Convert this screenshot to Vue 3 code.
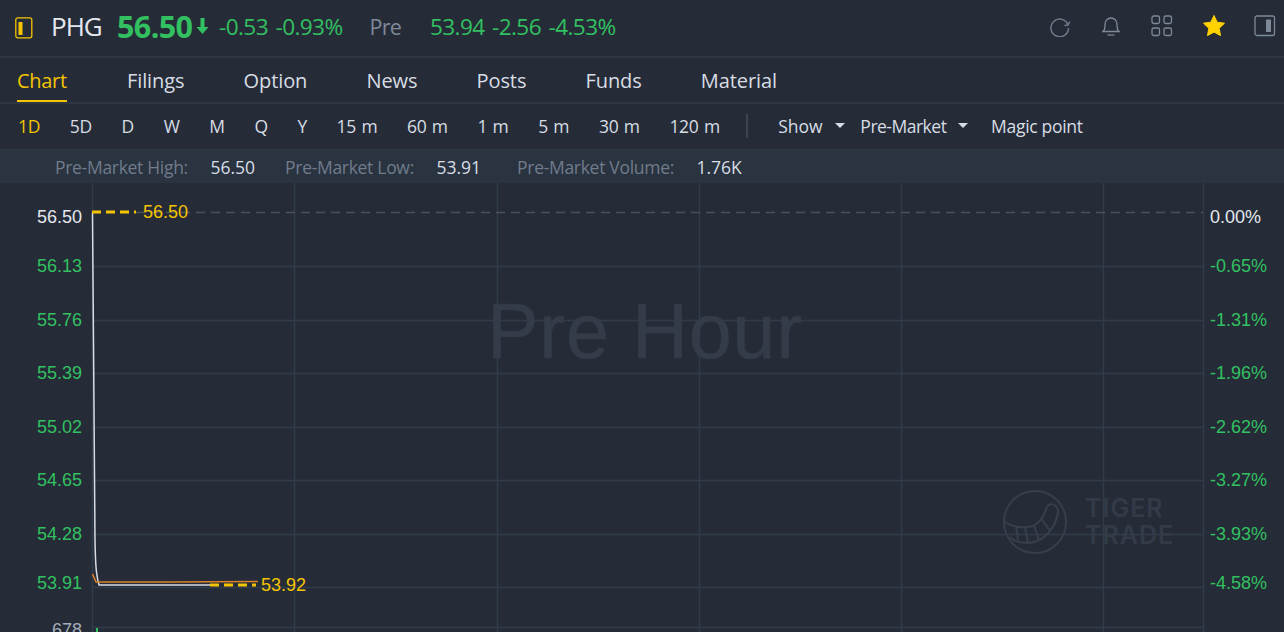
<script setup>
const tabs = ['Chart', 'Filings', 'Option', 'News', 'Posts', 'Funds', 'Material']
const periods = ['1D', '5D', 'D', 'W', 'M', 'Q', 'Y', '15 m', '60 m', '1 m', '5 m', '30 m', '120 m']
const stats = [
  { label: 'Pre-Market High:', value: '56.50' },
  { label: 'Pre-Market Low:', value: '53.91' },
  { label: 'Pre-Market Volume:', value: '1.76K' }
]
const vLines = [92, 294, 497, 699, 901, 1103, 1203]
const hLines = [266, 320, 373, 427, 480, 534, 587, 627]
const prices = [
  { t: '56.50', y: 223, c: '#e4e8ee' },
  { t: '56.13', y: 272, c: '#32c060' },
  { t: '55.76', y: 326, c: '#32c060' },
  { t: '55.39', y: 379, c: '#32c060' },
  { t: '55.02', y: 433, c: '#32c060' },
  { t: '54.65', y: 486, c: '#32c060' },
  { t: '54.28', y: 540, c: '#32c060' },
  { t: '53.91', y: 589, c: '#32c060' }
]
const pcts = [
  { t: '0.00%', y: 223, c: '#e4e8ee' },
  { t: '-0.65%', y: 272, c: '#32c060' },
  { t: '-1.31%', y: 326, c: '#32c060' },
  { t: '-1.96%', y: 379, c: '#32c060' },
  { t: '-2.62%', y: 433, c: '#32c060' },
  { t: '-3.27%', y: 486, c: '#32c060' },
  { t: '-3.93%', y: 540, c: '#32c060' },
  { t: '-4.58%', y: 589, c: '#32c060' }
]
</script>

<template>
  <div class="page">
    <header class="head">
      <svg class="logo" width="20" height="24" viewBox="0 0 20 24">
        <rect x=".8" y="1.800" width="16" height="20" rx="2" fill="none" stroke="#f5c400" stroke-width="1.300" />
        <rect x="3.500" y="6" width="4" height="13" fill="#f5c400" />
      </svg>
      <span class="sym">PHG</span>
      <span class="price">56.50</span>
      <svg class="arrow" width="13" height="18" viewBox="0 0 13 18">
        <path d="M4.500 1h4v9h4l-6 7-6-7h4z" fill="#32c060" />
      </svg>
      <span class="chg">-0.53</span>
      <span class="chg pc">-0.93%</span>
      <span class="pre">Pre</span>
      <span class="chg prep">53.94</span>
      <span class="chg pc">-2.56</span>
      <span class="chg pc">-4.53%</span>
      <div class="tools">
        <svg width="22" height="22" viewBox="0 0 22 22" fill="none" stroke="#6f7a8a" stroke-width="1.500">
          <path d="M18.800 9.500A8.800 8.800 0 1 0 19.500 13" />
          <path d="M15.500 10.500 19 10l1.800-3.300" />
        </svg>
        <svg width="20" height="22" viewBox="0 0 20 22" fill="none" stroke="#7d8898" stroke-width="1.300">
          <path d="M2 16.500c1.800-1.500 2-3 2-5.500V9a6 6 0 0 1 12 0v2c0 2.500.2 4 2 5.500z" />
          <path d="M6.500 20h7" />
        </svg>
        <svg width="22" height="22" viewBox="0 0 22 22" fill="none" stroke="#7d8898" stroke-width="1.300">
          <rect x="1" y="1" width="7.500" height="7.500" rx="1.800" />
          <rect x="13" y="1" width="7.500" height="7.500" rx="1.800" />
          <rect x="1" y="13" width="7.500" height="7.500" rx="1.800" />
          <rect x="13" y="13" width="7.500" height="7.500" rx="1.800" />
        </svg>
        <svg class="star" width="24" height="24" viewBox="0 0 24 24">
          <path d="M12 1.500l3.200 6.700 7.300 1-5.300 5.100 1.300 7.300L12 18.100l-6.500 3.500 1.300-7.300L1.500 9.200l7.300-1z" fill="#ffd200" stroke="#ffd200" stroke-width="1" stroke-linejoin="round" />
        </svg>
        <svg width="22" height="22" viewBox="0 0 22 22">
          <rect x="1" y="1" width="19.500" height="19.500" rx="2" fill="none" stroke="#7d8898" stroke-width="1.300" />
          <rect x="12" y="4.500" width="5" height="12.500" rx=".5" fill="#7d8898" />
        </svg>
      </div>
    </header>

    <nav class="tabs">
      <span v-for="(t, i) in tabs" :key="t" class="tab" :class="{ on: i === 0 }">{{ t }}</span>
    </nav>

    <div class="bar">
      <span v-for="(p, i) in periods" :key="p" class="per" :class="{ on: i === 0 }">{{ p }}</span>
      <i class="sep"></i>
      <span class="drop show">Show<b class="caret"></b></span>
      <span class="drop">Pre-Market<b class="caret"></b></span>
      <span class="magic">Magic point</span>
    </div>

    <div class="stats">
      <span v-for="s in stats" :key="s.label" class="stat">
        <span class="lab">{{ s.label }}</span>
        <span class="val">{{ s.value }}</span>
      </span>
    </div>

    <svg class="chart" width="1284" height="449" viewBox="0 183 1284 449">
      <line v-for="x in vLines" :key="x" :x1="x + .5" :x2="x + .5" y1="183" y2="632" stroke="#303c4a" stroke-width="1.400" />
      <line v-for="y in hLines" :key="y" x1="92" x2="1203" :y1="y + .5" :y2="y + .5" stroke="#303c4a" stroke-width="1.400" />
      <line x1="136" x2="1203" y1="212.500" y2="212.500" stroke="#4a505c" stroke-width="1.300" stroke-dasharray="9 6" />

      <text x="645" y="358" class="wm" text-anchor="middle">Pre Hour</text>

      <g fill="none" stroke="#373f4c" stroke-width="2">
        <circle cx="1035" cy="522" r="31" />
        <path d="M1047 507C1044 516 1038 527 1027 527C1019 528 1011 526 1005 522" />
        <path d="M1047 507C1050 502 1058 504 1058 512C1056 526 1045 543 1027 543C1020 543 1014 541 1010 537" />
        <path d="M1016 526l2 14M1025 527l3 16M1034 525l5 15M1041 518l9 13" />
      </g>
      <text x="1085" y="517" class="wmt">TIGER</text>
      <text x="1085" y="544" class="wmt">TRADE</text>

      <path d="M92.500 213L95 540Q95.500 565 96.500 572Q97.500 580 99 585H210" fill="none" stroke="#d9dde3" stroke-width="1.500" />
      <path d="M92.500 574L96 582H170L258 581.500" fill="none" stroke="#d9822b" stroke-width="1.600" />
      <line x1="92" x2="136" y1="212" y2="212" stroke="#f5c400" stroke-width="3" stroke-dasharray="9 5" />
      <line x1="210" x2="256" y1="585" y2="585" stroke="#f5c400" stroke-width="3" stroke-dasharray="9 5" />
      <rect x="96" y="628" width="2" height="4" fill="#32c060" />

      <text x="143" y="218" class="tick" fill="#f5c400">56.50</text>
      <text x="261" y="591" class="tick" fill="#f5c400">53.92</text>

      <text v-for="p in prices" :key="p.t" x="82" :y="p.y" class="tick" text-anchor="end" :fill="p.c">{{ p.t }}</text>
      <text x="82" y="636" class="tick" text-anchor="end" fill="#a4adb9">678</text>
      <text v-for="p in pcts" :key="p.t" x="1210" :y="p.y" class="tick" :fill="p.c">{{ p.t }}</text>
    </svg>
  </div>
</template>

<style scoped>
.page {
  width: 1284px;
  height: 632px;
  overflow: hidden;
  background: #252c38;
  font-family: "Open Sans", "Noto Sans", sans-serif;
  color: #d8dde4;
  display: flex;
  flex-direction: column;
}
.head {
  height: 58px;
  box-sizing: border-box;
  display: flex;
  align-items: center;
  padding: 0 8px 4px 15px;
  border-bottom: 2px solid #2e3744;
}
.logo { margin: 4px 16px 0 0; }
.sym { font-size: 26px; color: #e4e8ee; letter-spacing: -1px; width: 66px; }
.price { font-size: 30.500px; font-weight: 700; color: #32c060; letter-spacing: -.6px; width: 79px; }
.arrow { margin-right: 10px; }
.chg { font-size: 22.600px; color: #32c060; letter-spacing: -.6px; }
.chg.pc { margin-left: 7.500px; }
.pre { font-size: 21.500px; color: #7f8998; margin-left: 27px; letter-spacing: -.8px; }
.prep { margin-left: 29px; }
.tools { margin-left: auto; display: flex; align-items: center; gap: 30px; }
.star { margin: 0 -2px 0 -1px; }
.tabs {
  height: 46px;
  box-sizing: border-box;
  display: flex;
  gap: 59.200px;
  padding-left: 17px;
  border-bottom: 2px solid #2e3744;
}
.tab {
  font-size: 20px;
  letter-spacing: -.1px;
  height: 44px;
  line-height: 46px;
  box-sizing: border-box;
  color: #d8dde4;
}
.tab.on { color: #f5c400; border-bottom: 2px solid #f5c400; letter-spacing: -.3px; margin-right: 1px; }
.bar {
  height: 47px;
  box-sizing: border-box;
  display: flex;
  align-items: center;
  padding: 0 0 2px 18px;
  gap: 29.700px;
  border-bottom: 2px solid #2e3744;
  font-size: 17.500px;
}
.per { letter-spacing: -.3px; word-spacing: 1.200px; }
.per.on { color: #f5c400; }
.sep { width: 2px; height: 24px; background: #3c4552; margin-left: -4px; margin-right: 1px; }
.drop { display: flex; align-items: center; margin-right: -14px; letter-spacing: -.5px; }
.drop.show { letter-spacing: 0; }
.magic { letter-spacing: -.3px; margin-left: 7px; }
.caret {
  width: 0;
  height: 0;
  margin-left: 12px;
  border: 5px solid transparent;
  border-top: 5px solid #d8dde4;
  border-bottom: 0;
}
.stats {
  height: 32px;
  background: #2a3340;
  display: flex;
  align-items: center;
  padding-left: 55px;
  gap: 30px;
  font-size: 17.500px;
}
.stat { display: flex; gap: 22.500px; }
.stat:last-child { margin-left: 6px; }
.lab { color: #707b8b; letter-spacing: -.3px; }
.val { color: #d8dde4; }
.chart { display: block; flex: none; }
.tick { font-family: "Liberation Sans", Arial, sans-serif; font-size: 18px; }
.wm { font-family: "Liberation Sans", Arial, sans-serif; font-size: 77px; fill: #343c49; stroke: #343c49; stroke-width: .6; letter-spacing: 1px; }
.wmt { font-family: "Inter", "Liberation Sans", sans-serif; font-size: 25px; font-weight: 600; fill: #333b48; letter-spacing: 1px; }
</style>
